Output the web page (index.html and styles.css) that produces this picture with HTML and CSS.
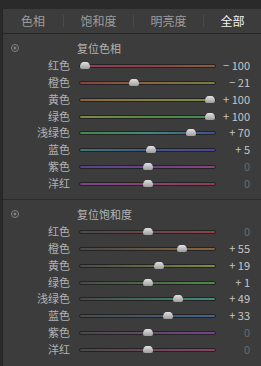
FILE: index.html
```html
<!DOCTYPE html>
<html lang="zh-CN">
<head>
    <meta charset="UTF-8">
    <meta name="viewport" content="width=device-width, initial-scale=1.0">
    <title>HSL</title>
    <link rel="stylesheet" href="styles.css">
</head>
<body>
    <div id="panel">
        <div id="tabs">
            <div class="tab">色相</div>
            <div class="tab">饱和度</div>
            <div class="tab">明亮度</div>
            <div class="tab active">全部</div>
        </div>

        <div class="section">
            <div class="heading">
                <span class="reset-icon"></span>
                <span class="heading-text">复位色相</span>
            </div>
            <div class="row">
                <span class="label">红色</span>
                <div class="track hue-red"><span class="thumb" style="--v: -100"></span></div>
                <span class="value">− 100</span>
            </div>
            <div class="row">
                <span class="label">橙色</span>
                <div class="track hue-orange"><span class="thumb" style="--v: -21"></span></div>
                <span class="value">− 21</span>
            </div>
            <div class="row">
                <span class="label">黄色</span>
                <div class="track hue-yellow"><span class="thumb" style="--v: 100"></span></div>
                <span class="value">+ 100</span>
            </div>
            <div class="row">
                <span class="label">绿色</span>
                <div class="track hue-green"><span class="thumb" style="--v: 100"></span></div>
                <span class="value">+ 100</span>
            </div>
            <div class="row">
                <span class="label">浅绿色</span>
                <div class="track hue-aqua"><span class="thumb" style="--v: 70"></span></div>
                <span class="value">+ 70</span>
            </div>
            <div class="row">
                <span class="label">蓝色</span>
                <div class="track hue-blue"><span class="thumb" style="--v: 5"></span></div>
                <span class="value">+ 5</span>
            </div>
            <div class="row">
                <span class="label">紫色</span>
                <div class="track hue-purple"><span class="thumb" style="--v: 0"></span></div>
                <span class="value zero">0</span>
            </div>
            <div class="row">
                <span class="label">洋红</span>
                <div class="track hue-magenta"><span class="thumb" style="--v: 0"></span></div>
                <span class="value zero">0</span>
            </div>
        </div>

        <div class="section divided">
            <div class="heading">
                <span class="reset-icon"></span>
                <span class="heading-text">复位饱和度</span>
            </div>
            <div class="row">
                <span class="label">红色</span>
                <div class="track sat-red"><span class="thumb" style="--v: 0"></span></div>
                <span class="value zero">0</span>
            </div>
            <div class="row">
                <span class="label">橙色</span>
                <div class="track sat-orange"><span class="thumb" style="--v: 55"></span></div>
                <span class="value">+ 55</span>
            </div>
            <div class="row">
                <span class="label">黄色</span>
                <div class="track sat-yellow"><span class="thumb" style="--v: 19"></span></div>
                <span class="value">+ 19</span>
            </div>
            <div class="row">
                <span class="label">绿色</span>
                <div class="track sat-green"><span class="thumb" style="--v: 1"></span></div>
                <span class="value">+ 1</span>
            </div>
            <div class="row">
                <span class="label">浅绿色</span>
                <div class="track sat-aqua"><span class="thumb" style="--v: 49"></span></div>
                <span class="value">+ 49</span>
            </div>
            <div class="row">
                <span class="label">蓝色</span>
                <div class="track sat-blue"><span class="thumb" style="--v: 33"></span></div>
                <span class="value">+ 33</span>
            </div>
            <div class="row">
                <span class="label">紫色</span>
                <div class="track sat-purple"><span class="thumb" style="--v: 0"></span></div>
                <span class="value zero">0</span>
            </div>
            <div class="row">
                <span class="label">洋红</span>
                <div class="track sat-magenta"><span class="thumb" style="--v: 0"></span></div>
                <span class="value zero">0</span>
            </div>
        </div>
    </div>
</body>
</html>
```

FILE: styles.css
```css
body {
    margin: 0;
    padding-top: 9px;
    background-color: #2a2a2a;
    font-family: "Noto Sans CJK SC", sans-serif;
    font-size: 11px;
    color: #b2b2b2;
    overflow: hidden;
}

#panel {
    margin-left: 2px;
    height: 357px;
    background-color: #3c3c3c;
    border-left: 1px solid #242424;
}

#tabs {
    display: grid;
    grid-template-columns: 60px 70px 70px 1fr;
    height: 24px;
    align-items: center;
    border-bottom: 1px solid #262626;
}

.tab {
    text-align: center;
    font-size: 12px;
    line-height: 12px;
    color: #9c9c9c;
    border-left: 1px solid #4a4a4a;
}

.tab:first-child {
    border-left: none;
}

.tab.active {
    color: #f2f2f2;
}

.section {
    padding: 5px 0 8px 0;
}

.divided {
    border-top: 1px solid #2c2c2c;
}

.heading {
    display: flex;
    align-items: center;
    height: 18px;
}

.reset-icon {
    width: 6px;
    height: 6px;
    margin-left: 8px;
    border: 1px solid #848484;
    border-radius: 50%;
    background: radial-gradient(circle, #848484 0 1.2px, transparent 1.7px);
}

.heading-text {
    margin-left: 58px;
    color: #b4b4b4;
}

.row {
    display: grid;
    grid-template-columns: 76px 137px 34px;
    align-items: center;
    height: 16.75px;
}

.label {
    text-align: right;
    padding-right: 9px;
    line-height: 12px;
}

.track {
    position: relative;
    height: 2px;
    border: 1px solid #232323;
    border-radius: 2px;
    margin-top: 2px;
}

.thumb {
    position: absolute;
    bottom: -2px;
    left: calc((var(--v) + 100) / 200 * (100% - 10px));
    width: 10px;
    height: 7px;
    border-radius: 50% 50% 3px 3px / 100% 100% 3px 3px;
    background: linear-gradient(#e2e2e2, #9c9c9c);
}

.value {
    text-align: right;
    color: #c6c6c6;
    line-height: 12px;
}

.value.zero {
    color: #6a6a6a;
}

.hue-red { background: linear-gradient(to right, #8e3e62, #8e3e46, #8a5e3e); }
.hue-orange { background: linear-gradient(to right, #8a4040, #86663e, #7c7c40); }
.hue-yellow { background: linear-gradient(to right, #8a6440, #86803e, #7a8c42); }
.hue-green { background: linear-gradient(to right, #7e8a40, #568a42, #408a5a); }
.hue-aqua { background: linear-gradient(to right, #408a48, #408a80, #42508e); }
.hue-blue { background: linear-gradient(to right, #3a7a74, #42588c, #4e4890); }
.hue-purple { background: linear-gradient(to right, #56448e, #70428a, #8a4280); }
.hue-magenta { background: linear-gradient(to right, #7a448e, #8a4272, #8e4052); }

.sat-red { background: linear-gradient(to right, #4a4a4a, #8e4048); }
.sat-orange { background: linear-gradient(to right, #4a4a4a, #8a6440); }
.sat-yellow { background: linear-gradient(to right, #4a4a4a, #848a42); }
.sat-green { background: linear-gradient(to right, #4a4a4a, #4e8a48); }
.sat-aqua { background: linear-gradient(to right, #4a4a4a, #408e7c); }
.sat-blue { background: linear-gradient(to right, #4a4a4a, #42648c); }
.sat-purple { background: linear-gradient(to right, #4a4a4a, #7a428e); }
.sat-magenta { background: linear-gradient(to right, #4a4a4a, #8e4266); }
```
